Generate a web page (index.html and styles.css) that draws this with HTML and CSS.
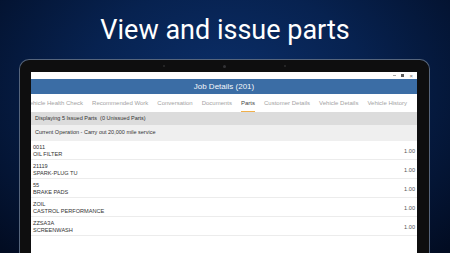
FILE: index.html
```html
<!DOCTYPE html>
<html>
<head>
  <title>View and issue parts</title>
  <link rel="stylesheet" href="styles.css">
</head>
<body>
  <div class="stage">
    <h1 class="headline">View and issue parts</h1>

    <div class="device">
      <div class="bezel-top">
        <span class="cam"></span>
        <span class="cam cam-main"></span>
        <span class="cam"></span>
      </div>

      <div class="screen">
        <div class="titlebar">
          <span class="wc-min"></span>
          <span class="wc-max"></span>
          <span class="wc-close">&times;</span>
        </div>

        <div class="appbar">Job Details (201)</div>

        <div class="tabs">
          <span class="tab first">Vehicle Health Check</span>
          <span class="tab">Recommended Work</span>
          <span class="tab">Conversation</span>
          <span class="tab">Documents</span>
          <span class="tab active">Parts</span>
          <span class="tab">Customer Details</span>
          <span class="tab">Vehicle Details</span>
          <span class="tab">Vehicle History</span>
        </div>

        <div class="info info-count">Displaying 5 Issued Parts&nbsp; (0 Unissued Parts)</div>
        <div class="info info-op">Current Operation - Carry out 20,000 mile service</div>

        <div class="part-list">
          <div class="part">
            <div class="part-name">
              <span>0011</span>
              <span>OIL FILTER</span>
            </div>
            <span class="part-qty">1.00</span>
          </div>
          <div class="part">
            <div class="part-name">
              <span>21119</span>
              <span>SPARK-PLUG TU</span>
            </div>
            <span class="part-qty">1.00</span>
          </div>
          <div class="part">
            <div class="part-name">
              <span>55</span>
              <span>BRAKE PADS</span>
            </div>
            <span class="part-qty">1.00</span>
          </div>
          <div class="part">
            <div class="part-name">
              <span>ZOIL</span>
              <span>CASTROL PERFORMANCE</span>
            </div>
            <span class="part-qty">1.00</span>
          </div>
          <div class="part">
            <div class="part-name">
              <span>ZZSA3A</span>
              <span>SCREENWASH</span>
            </div>
            <span class="part-qty">1.00</span>
          </div>
        </div>
      </div>
    </div>
  </div>
</body>
</html>
```

FILE: styles.css
```css
html, body {
  margin: 0;
  height: 100%;
}

body {
  overflow: hidden;
  background: radial-gradient(ellipse 70% 90% at 50% 35%, #0b2f6a 0%, #072250 45%, #020c22 100%);
  font-family: "Liberation Sans", Arial, sans-serif;
}

.stage {
  display: flex;
  flex-direction: column;
  height: 253px;
}

.headline {
  flex: none;
  margin: 0;
  padding-top: 14px;
  height: 59px;
  box-sizing: border-box;
  text-align: center;
  font-family: Roboto, "Noto Sans", sans-serif;
  font-weight: 400;
  font-size: 27px;
  line-height: 32px;
  color: #ffffff;
}

.device {
  flex: 1;
  display: flex;
  flex-direction: column;
  margin: 0 20px 0 19px;
  padding: 0 12px 0 11px;
  background: #0e0e0f;
  border: 1px solid #56657c;
  border-bottom: none;
  border-radius: 10px 10px 0 0;
  min-height: 0;
}

.bezel-top {
  height: 12px;
  flex: none;
  display: flex;
  justify-content: center;
  align-items: center;
  gap: 58px;
}

.cam {
  width: 2px;
  height: 2px;
  border-radius: 50%;
  background: #2c2c2e;
}

.cam-main {
  width: 3px;
  height: 3px;
  background: #333336;
}

.screen {
  flex: 1;
  display: flex;
  flex-direction: column;
  background: #ffffff;
  overflow: hidden;
  min-height: 0;
}

.titlebar {
  height: 7px;
  flex: none;
  display: flex;
  justify-content: flex-end;
  align-items: center;
  gap: 5px;
  padding-right: 4px;
}

.wc-min {
  width: 3px;
  height: 1px;
  background: #a8a8a8;
}

.wc-max {
  width: 3px;
  height: 3px;
  background: #5a5a5a;
}

.wc-close {
  font-size: 6px;
  line-height: 6px;
  color: #777;
}

.appbar {
  height: 15px;
  flex: none;
  background: #3b6da5;
  color: #f4f7fb;
  text-align: center;
  font-size: 8px;
  line-height: 15px;
}

.tabs {
  height: 18px;
  flex: none;
  display: flex;
  gap: 9px;
  font-size: 6px;
  white-space: nowrap;
  overflow: hidden;
}

.tab {
  display: flex;
  align-items: center;
  padding-top: 1px;
  border-bottom: 1px solid transparent;
  color: #a3a3a3;
}

.tab.first {
  margin-left: -5px;
}

.tab.active {
  color: #444;
  border-bottom-color: #f0b04c;
}

.info {
  flex: none;
  padding: 0 4px;
  font-size: 5.5px;
  color: #333;
  white-space: nowrap;
}

.info-count {
  height: 13px;
  line-height: 13px;
  background: #dcdcdc;
}

.info-op {
  height: 16px;
  line-height: 15px;
  background: #efefef;
}

.part {
  display: flex;
  justify-content: space-between;
  align-items: center;
  padding: 3px 2px 1px;
  border-bottom: 1px solid #ececec;
  font-size: 5.6px;
  color: #333;
}

.part-name {
  display: flex;
  flex-direction: column;
  line-height: 7px;
}

.part-qty {
  color: #555;
}
```
